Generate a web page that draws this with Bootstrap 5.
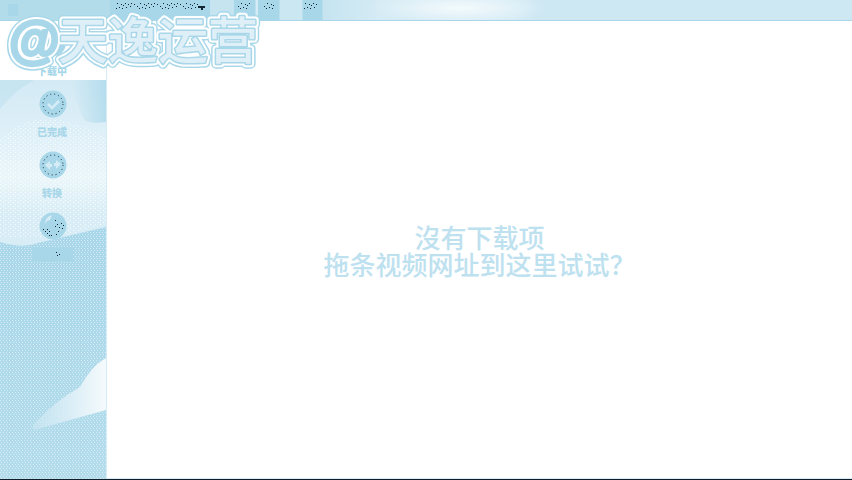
<!DOCTYPE html>
<html lang="zh-CN">
<head>
<meta charset="utf-8">
<meta name="viewport" content="width=device-width, initial-scale=1">
<title>下载</title>
<link href="https://cdn.jsdelivr.net/npm/bootstrap@5.3.0/dist/css/bootstrap.min.css" rel="stylesheet">
<style>
:root{--sky:#a8d7e9;--pale:#d5ebf5}
body{font-family:"Liberation Sans","Noto Sans CJK SC",sans-serif;background:#fff}
.shell{border-bottom:1px solid #101e2a;box-shadow:inset 0 -1px var(--pale)}
.topbar{height:21px;border-bottom:1px solid var(--sky);background:radial-gradient(ellipse 90px 17px at 460px 8px,#f3fafc,transparent),linear-gradient(90deg,#b3dceb 0 110px,var(--sky) 110px 210px,#c5e4f0 210px 234px,var(--sky) 234px 255px,var(--pale) 256px 258px,var(--sky) 258px 279px,#cbe7f2 280px 302px,var(--sky) 303px 322px,#c5e4f0 323px,var(--pale) 380px 510px,#cde7f3 540px)}
.mark-sq{width:10px;height:12px;background:var(--sky);margin-left:8px}
.address{width:100px;height:20px;margin-left:92px}
.tool{width:22px;height:20px}
.side{width:107px;border-right:1px solid var(--pale)}
.scenery{inset:0}
.entry{height:61px;color:var(--sky);font:900 10px/12px "Noto Sans CJK SC",sans-serif}
.entry.first{height:59px;background:#fff}
.entry svg{width:28px;height:28px}
.caption-row{margin-top:8px;height:13px;padding-right:2px}
.entry:not(.first){padding-top:10px!important}
.first svg{margin-top:8px}
.blank-cap{width:40px;background:var(--sky)}
.empty{font:500 26px/27px "Noto Sans CJK SC",sans-serif;color:#bde1ef;padding-bottom:0}
.stamp{left:0;top:0;width:270px;height:85px;font:500 50px "Noto Sans CJK SC",sans-serif;stroke-linejoin:round;pointer-events:none}
</style>
</head>
<body>
<svg class="position-absolute" width="0" height="0" aria-hidden="true"><defs>
<pattern id="specks" width="23" height="12" patternUnits="userSpaceOnUse"><path fill="#142430" d="M1 4h1v1h-1zM4 6h1v1h-1zM3 1h1v1h-1zM7 3h1v1h-1zM9 7h1v1h-1zM11 4h1v1h-1zM13 5h1v1h-1zM15 3h1v1h-1zM16 7h1v1h-1zM18 4h1v1h-1zM20 6h1v1h-1zM21 3h1v1h-1zM6 8h1v1h-1zM12 8h1v1h-1z"/></pattern>
<pattern id="grain" width="3" height="4" patternUnits="userSpaceOnUse"><path fill="#d5ebf5" d="M0 0h1v1H0zM1 2h1v1H1z"/></pattern>
<pattern id="snow" width="5" height="4" patternUnits="userSpaceOnUse"><path fill="#fff" d="M0 0h1v1H0zM3 2h1v1H3z"/></pattern>
<linearGradient id="sky" x2="0" y2="1"><stop stop-color="#cae6f2"/><stop offset=".15" stop-color="#d5ebf5"/><stop offset=".25" stop-color="#dff0f8"/><stop offset=".34" stop-color="#ebf6fa"/><stop offset=".42" stop-color="#d9edf6"/><stop offset="1" stop-color="#d5ebf5"/></linearGradient>
<linearGradient id="corner" x1="0" x2="1"><stop stop-color="#a8d7e9" stop-opacity="0"/><stop offset="1" stop-color="#a8d7e9" stop-opacity=".7"/></linearGradient>
<linearGradient id="hill" x2="0" y2="1"><stop stop-color="#a8d7e9"/><stop offset="1" stop-color="#b3dceb"/></linearGradient>
<linearGradient id="cloud" x1="0" x2="1"><stop stop-color="#d5ebf5" stop-opacity=".4"/><stop offset=".5" stop-color="#d9edf6"/><stop offset="1" stop-color="#f5fafc"/></linearGradient>
</defs></svg>
<div class="shell d-flex flex-column vh-100 position-relative overflow-hidden">
 <header class="topbar d-flex align-items-center flex-shrink-0">
  <span class="mark-sq"></span>
  <button class="address btn p-0 border-0 rounded-0 d-flex" aria-label="地址"><svg width="100" height="20"><path fill="url(#specks)" d="M5 2h84v9H5z"/><path fill="#142430" d="M88 6h7v2h-2v2h-2V8h-3z"/></svg></button>
  <button class="tool btn p-0 border-0 rounded-0 ms-4 d-flex" aria-label="工具"><svg width="22" height="20"><path fill="url(#specks)" d="M3 3h13v6H3z"/></svg></button>
  <button class="tool btn p-0 border-0 rounded-0 ms-1 d-flex" aria-label="选项"><svg width="22" height="20"><path fill="url(#specks)" d="M2 3h13v6H2z"/></svg></button>
  <button class="tool btn p-0 border-0 rounded-0 ms-3 d-flex" aria-label="帮助"><svg width="22" height="20"><path fill="url(#specks)" d="M6 3h13v6H6z"/></svg></button>
 </header>
 <div class="d-flex flex-grow-1">
  <aside class="side position-relative flex-shrink-0">
   <svg class="scenery position-absolute w-100 h-100" viewBox="0 21 106 458" preserveAspectRatio="none" aria-hidden="true">
    <path fill="url(#sky)" d="M0 21h106v458H0z"/><path fill="url(#corner)" d="M72 80h34v42q-16 2-22-2-10-20-12-40z"/>
    <path fill="#a8d7e9" opacity=".3" d="M0 80h34Q14 91 0 109z"/><path fill="url(#snow)" opacity=".8" d="M0 138q42-38 106 0v86l-50 14H0z"/>
    <path fill="url(#hill)" d="M0 242q22 7 38 1l68-16v252H0z"/><path fill="url(#grain)" d="M0 242q22 7 38 1l68-16v252H0z"/>
    <path fill="url(#cloud)" d="M106 358Q91 366 80 387 54 402 36 422q-6 6-2 8l72-20z"/>
   </svg>
   <nav class="position-relative d-flex flex-column" aria-label="列表">
    <button class="entry first btn p-0 border-0 rounded-0 d-flex flex-column align-items-center"><svg viewBox="0 0 28 28" aria-hidden="true"><circle cx="14" cy="14" r="13" fill="#a8d7e9"/></svg><span class="caption-row">下载中</span></button>
    <button class="entry btn p-0 border-0 rounded-0 d-flex flex-column align-items-center"><svg viewBox="0 0 28 28" aria-hidden="true"><circle cx="14" cy="14" r="13.5" fill="#a8d7e9"/><circle cx="14" cy="14" r="10" fill="none" stroke="#142430" stroke-dasharray="1 3"/><path d="m9 14 4 4 7-7" fill="none" stroke="#d5ebf5" stroke-width="2.5"/></svg><span class="caption-row">已完成</span></button>
    <button class="entry btn p-0 border-0 rounded-0 d-flex flex-column align-items-center"><svg viewBox="0 0 28 28" aria-hidden="true"><circle cx="14" cy="14" r="13.5" fill="#a8d7e9"/><circle cx="14" cy="14" r="10" fill="none" stroke="#142430" stroke-dasharray="1 3"/><path d="m6 14 5-4v3h2v3h-2v3zM22 13l-5-4v3h-2v3h2v3z" fill="#d5ebf5"/></svg><span class="caption-row">转换</span></button>
    <button class="entry btn p-0 border-0 rounded-0 d-flex flex-column align-items-center" aria-label="工具箱"><svg viewBox="0 0 28 28" aria-hidden="true"><circle cx="14" cy="14" r="13.5" fill="#a8d7e9"/><path d="M6 12q0-7 7-9l-2 5-3 1z" fill="#d5ebf5"/><path fill="#142430" d="M4 17h1v1H4zM6 19h1v1H6zM8 21h1v1H8zM10 23h1v1h-1zM12 23h1v1h-1zM8 17h1v1H8zM10 19h1v1h-1zM16 8h1v1h-1zM18 12h1v1h-1zM16 14h1v1h-1zM22 11h1v1h-1zM24 13h1v1h-1zM23 16h1v1h-1zM20 15h1v1h-1zM19 19h1v1h-1zM17 22h1v1h-1z"/></svg><span class="caption-row blank-cap"><svg class="d-block" viewBox="0 0 28 28"><path fill="#142430" d="M23 4h1v1h-1zM26 6h1v1h-1zM24 7h1v1h-1z"/></svg></span></button>
   </nav>
  </aside>
  <main class="empty flex-grow-1 d-flex flex-column justify-content-center align-items-center text-center"><p class="m-0">沒有下载项<br>拖条视频网址到这里试试？</p></main>
 </div>
 <svg class="stamp position-absolute" viewBox="0 0 270 85">
  <defs><g id="name"><text x="9" y="57" font-family="Liberation Sans" font-weight="bold" font-size="52">@</text><text x="58" y="59">天逸运营</text></g></defs>
  <use href="#name" fill="#a8d7e9" stroke="#a8d7e9" stroke-width="10"/>
  <use href="#name" fill="#fff" stroke="#fff" stroke-width="7"/>
  <use href="#name" fill="#a8d7e9" stroke="#a8d7e9" stroke-width="3"/>
  <text x="58" y="59" fill="#deeff7">天逸运营</text>
 </svg>
</div>
<script src="https://cdn.jsdelivr.net/npm/bootstrap@5.3.0/dist/js/bootstrap.bundle.min.js"></script>
</body>
</html>
